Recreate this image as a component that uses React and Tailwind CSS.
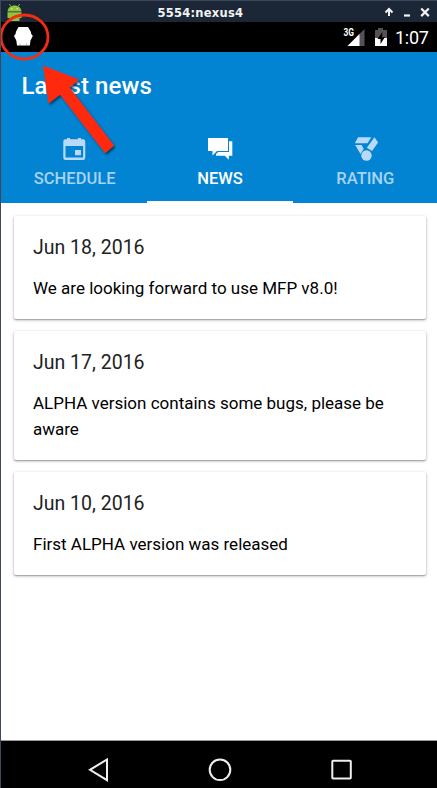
const news = [
  { date: 'Jun 18, 2016', text: 'We are looking forward to use MFP v8.0!', size: 'h-[103px]' },
  { date: 'Jun 17, 2016', text: 'ALPHA version contains some bugs, please be aware', size: 'h-[129px]' },
  { date: 'Jun 10, 2016', text: 'First ALPHA version was released', size: 'h-[103px]' },
];

function AndroidRobot() {
  return (
    <svg className="ml-[6px] mt-[2px] h-[19px] w-[16px] shrink-0" viewBox="0 0 16 19">
      <path d="M.5 8.500C.8 4.700 3.700 2.500 7.500 2.500s6.700 2.200 7 6z" fill="#8fc23e" />
      <path d="M4 3.500 2.300 1M11 3.500 12.700 1" stroke="#8fc23e" strokeWidth=".9" />
      <circle cx="4.800" cy="5.800" r=".8" fill="#dcebc0" />
      <circle cx="10.200" cy="5.800" r=".8" fill="#dcebc0" />
      <path d="M.5 9.200h14v5.800h-2V18h-10v-3h-2z" fill="#8fc23e" />
    </svg>
  );
}

function TitleBar() {
  return (
    <header className="flex h-[22px] border-t border-[#3c4858] bg-[#1b2737] text-[#f2f2f2]">
      <AndroidRobot />
      <div className="ml-[134.500px] mt-[4px] whitespace-nowrap font-['DejaVu_Sans'] text-[11.5px] font-bold leading-[16px] tracking-[0.250px]">5554:nexus4</div>
      <svg className="ml-auto mr-[6px] mt-[5px] h-[14px] w-[47px]" viewBox="0 0 47 14" fill="none" stroke="#f2f2f2">
        <path d="M5 10V3.500M1.500 6.500l3.500-3.500 3.500 3.500" strokeWidth="2" />
        <path d="M20 9.500h6" strokeWidth="2.200" />
        <path d="m37.200 2.500 7.600 7.600m0-7.600-7.600 7.600" strokeWidth="2.200" />
      </svg>
    </header>
  );
}

function StatusBar() {
  return (
    <div className="flex h-[30px] bg-black text-white">
      <svg className="ml-[12px] mt-[4px] h-[21px] w-[20px]" viewBox="0 0 20 21">
        <path d="M5.500 1h9.500l3 5v1.500l1.800 2.500-2.300 4.500-.7 5H4l-.7-5L1 10l1.800-2.500V6z" fill="white" />
        <path d="M7 17.500v2M13.500 17.500v2" stroke="#999" strokeWidth=".8" />
      </svg>
      <svg className="ml-auto mt-[5px] h-[21px] w-[46px]" viewBox="0 0 46 21">
        <path d="M21.500 2v17H4.500z" fill="#575056" />
        <path d="M16.500 7v12H4.500z" fill="white" />
        <path d="M0 0h12v10H0z" fill="black" />
        <text x=".5" y="9" fill="white" fontSize="10" fontWeight="700" fontFamily="Roboto, sans-serif" textLength="10.500" lengthAdjust="spacingAndGlyphs">3G</text>
        <path d="M35 1h5v2h4v16H32V3h3z" fill="#575056" />
        <path d="M32 11h12v8H32z" fill="white" />
        <path d="m39.500 5-5 7h3v5l4.500-7h-3z" fill="black" />
      </svg>
      <div className="ml-[6px] mr-[8px] mt-[5px] w-[34px] whitespace-nowrap text-[18px] leading-[22px] tracking-[-0.300px]">1:07</div>
    </div>
  );
}

function CalendarIcon() {
  return (
    <svg className="-ml-[2px] h-[24px] w-[24px]" viewBox="0 0 24 24">
      <path fillRule="evenodd" d="M5 1h3v1.300h8V1h3v1.300h2Q23.300 2.300 23.300 4.500v16Q23.300 23 21 23H3.500Q1.300 23 1.300 20.500v-16Q1.300 2.300 3.500 2.300H5zM3.500 9v11.500h17.600V9zM13 13h6v5.200h-6z" fill="#b9daf7" />
    </svg>
  );
}

function ChatIcon() {
  return (
    <svg className="h-[24px] w-[26px]" viewBox="0 0 26 24" fill="white">
      <path d="M1 1h20v13H10l-4.500 4.500V14H1z" />
      <path d="M22 4.200h3.300v14.500h-3.500v4l-4-4H9v-1.600l2.200-2H22z" />
    </svg>
  );
}

function MedalIcon() {
  return (
    <svg className="ml-[2px] h-[24px] w-[25px]" viewBox="0 0 25 24" fill="#b9daf7">
      <path d="M4 .3h13.300l-3.800 6H.8z" />
      <path d="m20.500.3 3.600 5.200-6 8.500-5.300-3.200z" />
      <path d="M1.200 8h6.500l2 4-3.200 5z" />
      <circle cx="12.500" cy="18.500" r="5.200" />
    </svg>
  );
}

function Tab({ icon, label, active }) {
  return (
    <div className={`flex flex-1 flex-col items-center border-b-2 pt-[12px] ${active ? 'border-white text-white' : 'border-transparent text-[#a9d2f3]'}`}>
      {icon}
      <div className="mt-[7px] text-[16.500px] font-medium leading-[22px]">{label}</div>
    </div>
  );
}

function NavigationBar() {
  return (
    <nav className="flex h-[48px] items-center justify-center border-t border-[#999] bg-black pt-[11px]">
      <svg className="h-[28px] w-[270px]" viewBox="0 0 270 28" fill="none" stroke="#eee" strokeWidth="2">
        <path d="M23 3.500v20.600L6 13.800z" />
        <circle cx="136" cy="13.800" r="10.300" />
        <rect x="248.300" y="4.800" width="18.500" height="17.800" rx=".8" />
      </svg>
    </nav>
  );
}

function Annotation() {
  return (
    <svg className="pointer-events-none absolute left-0 top-0 h-[170px] w-[140px]" viewBox="0 0 140 170">
      <defs>
        <filter id="shadow" x="-20%" y="-20%" width="150%" height="150%">
          <feDropShadow dx="1.500" dy="2" stdDeviation="1" floodColor="#002b45" floodOpacity=".8" />
        </filter>
      </defs>
      <ellipse cx="23.500" cy="37" rx="23.500" ry="22" fill="none" stroke="#f52c13" strokeWidth="2.800" />
      <path d="M42 65.500 78 79.500 68.500 87.500 113 145.500 104 153 59 94.500 47.500 103.500z" fill="#ff2a08" filter="url(#shadow)" />
    </svg>
  );
}

export default function App() {
  return (
    <main className="relative flex h-[788px] w-[437px] flex-col overflow-hidden border-l border-[#3f4858] bg-white font-['Roboto',sans-serif]">
      <TitleBar />
      <StatusBar />
      <section className="flex h-[151px] flex-col bg-[#0284d3]">
        <h1 className="h-[73px] pl-[20.500px] pt-[18px] text-[24px] font-medium leading-[32px] tracking-[0.080px] text-white">Latest news</h1>
        <div className="-mr-px flex flex-1 pl-px">
          <Tab icon={<CalendarIcon />} label="SCHEDULE" />
          <Tab icon={<ChatIcon />} label="NEWS" active />
          <Tab icon={<MedalIcon />} label="RATING" />
        </div>
      </section>
      <section className="flex flex-1 flex-col gap-[12px] pl-[13px] pr-[11px] pt-[13px]">
        {news.map((item) => (
          <article key={item.date} className={`rounded-[2px] bg-white pl-[19px] pr-[20px] pt-[19px] shadow-[0_1px_3px_rgba(0,0,0,0.35),0_1px_1px_rgba(0,0,0,0.15)] ${item.size}`}>
            <h2 className="text-[19.500px] leading-[26px] text-[#222]">{item.date}</h2>
            <p className="mt-[15px] text-[17px] leading-[25.500px] text-black">{item.text}</p>
          </article>
        ))}
      </section>
      <NavigationBar />
      <Annotation />
    </main>
  );
}
